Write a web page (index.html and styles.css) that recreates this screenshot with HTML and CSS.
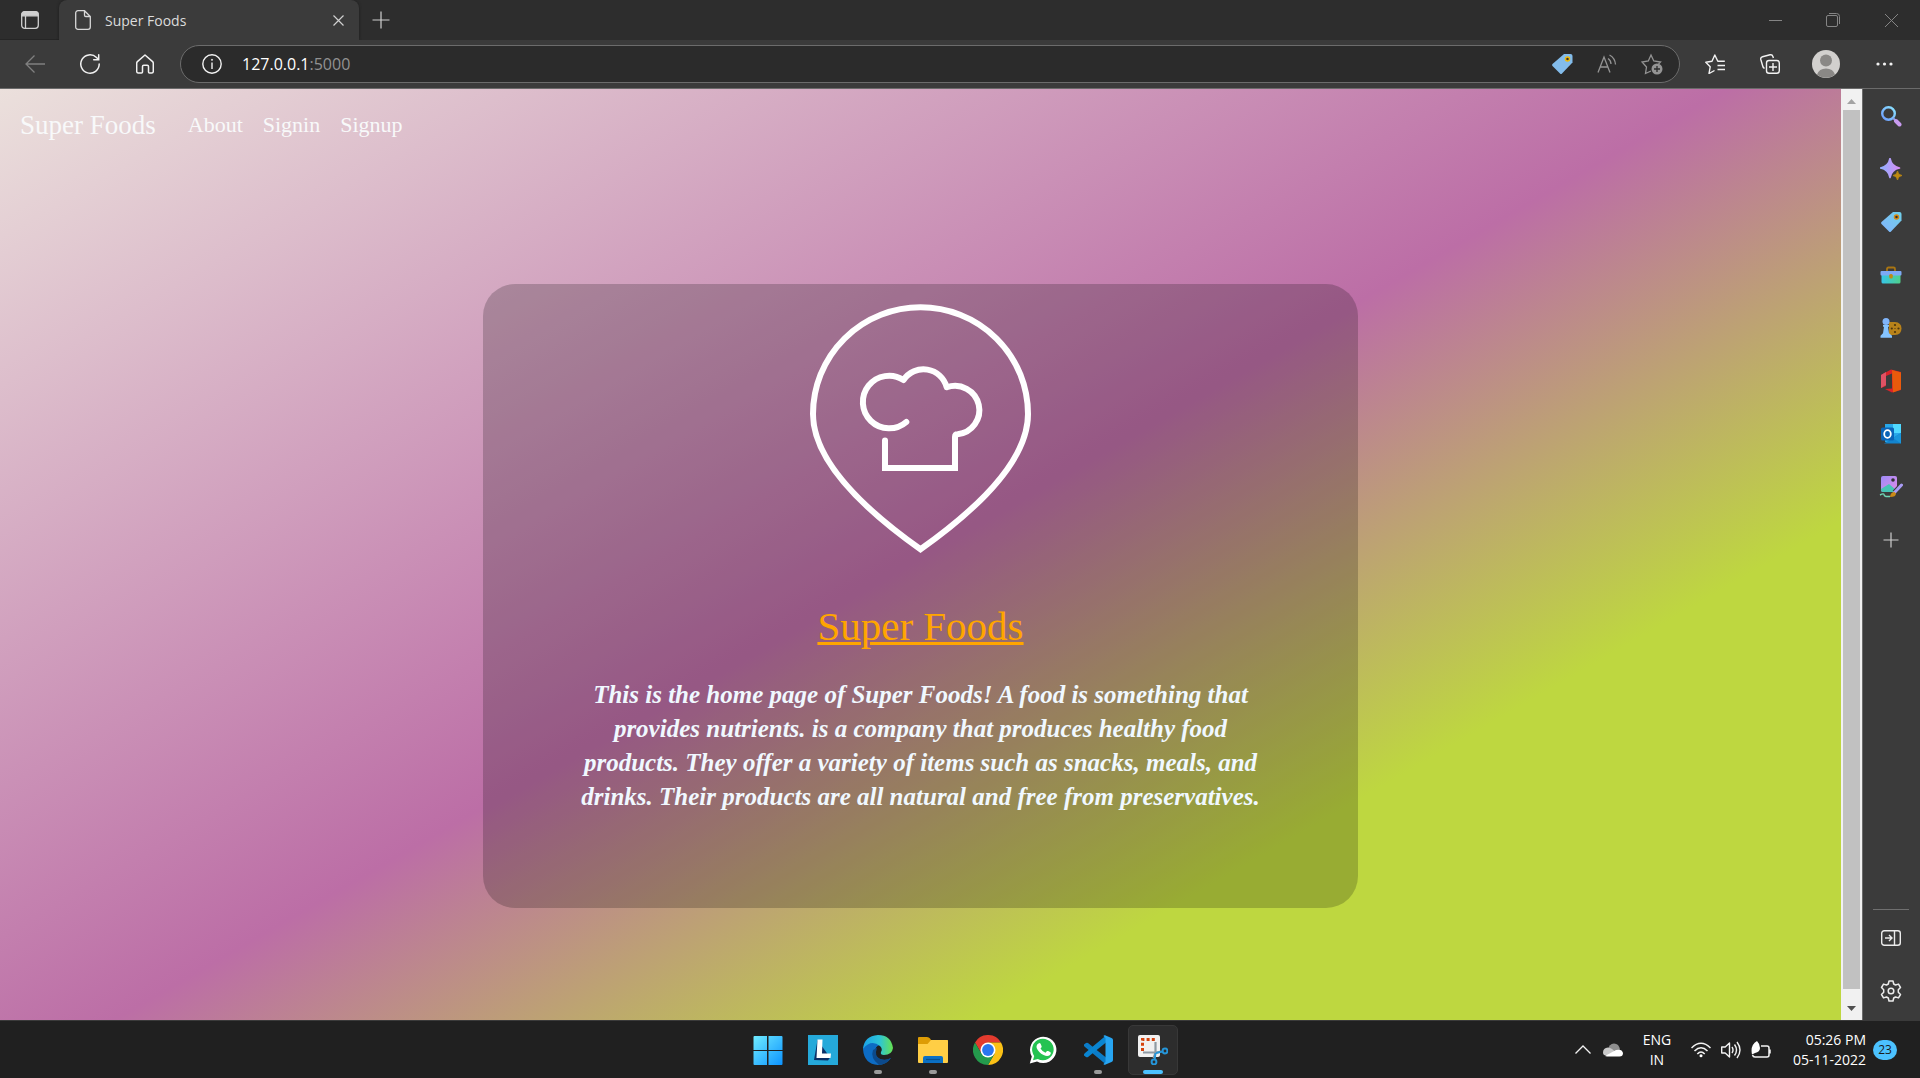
FILE: index.html
```html
<!DOCTYPE html>
<html lang="en">
<head>
<meta charset="utf-8">
<title>Super Foods</title>
<link rel="stylesheet" href="styles.css">
</head>
<body>
<header class="browser">
  <div class="tabstrip">
    <button class="tab-actions" aria-label="Tab actions menu"><svg width="18" height="18" viewBox="0 0 18 18" fill="none" stroke="#cfcfcf" stroke-width="1.3"><rect x=".7" y=".7" width="16.6" height="16.6" rx="3"/><path d="M1 4.800V3.500Q1 1 3.500 1h11Q17 1 17 3.500v1.300z" fill="#cfcfcf"/><path d="M4.500 5v12"/></svg></button>
    <div class="tab">
      <svg width="16" height="20" viewBox="0 0 16 20" fill="none" stroke="#d8d8d8" stroke-width="1.300"><path d="M3 .7h6.500L15.300 6.500V17a2.300 2.300 0 0 1-2.300 2.300H3A2.300 2.300 0 0 1 .7 17V3A2.300 2.300 0 0 1 3 .7zM9.500 1v4.200q0 1.300 1.300 1.300h4.200"/></svg>
      <span class="tab-title">Super Foods</span>
      <button class="tab-close" aria-label="Close tab"><svg width="11" height="11" viewBox="0 0 11 11" stroke="#d0d0d0" stroke-width="1.200"><path d="M.5.5l10 10M10.500.5l-10 10"/></svg></button>
    </div>
    <button class="new-tab" aria-label="New tab"><svg width="18" height="18" viewBox="0 0 18 18" stroke="#d0d0d0" stroke-width="1.200"><path d="M.5 9h17M9 .5v17"/></svg></button>
    <div class="window-controls">
      <button aria-label="Minimize"><svg width="13" height="13" viewBox="0 0 13 13" stroke="#858585"><path d="M0 6.500h13"/></svg></button>
      <button aria-label="Restore"><svg width="14" height="14" viewBox="0 0 14 14" fill="none" stroke="#858585"><rect x=".5" y="2.500" width="11" height="11" rx="1.500"/><path d="M3 .5h7.500q3 0 3 3V11"/></svg></button>
      <button aria-label="Close"><svg width="13" height="13" viewBox="0 0 13 13" stroke="#858585"><path d="M0 0l13 13M13 0L0 13"/></svg></button>
    </div>
  </div>
  <div class="toolbar">
    <div class="nav-buttons">
      <button aria-label="Back"><svg width="20" height="18" viewBox="0 0 20 18" fill="none" stroke="#808080" stroke-width="1.300"><path d="M20 9H1M9.500.5L1 9l8.500 8.500"/></svg></button>
      <button aria-label="Refresh"><svg width="20" height="20" viewBox="0 0 20 20" fill="none" stroke="#f2f2f2" stroke-width="1.500" stroke-linecap="round"><path d="M19.200 10A9.200 9.200 0 1 1 16.500 3.500L18.500 5.500M18.700.8v4.900h-5"/></svg></button>
      <button aria-label="Home"><svg width="18" height="20" viewBox="0 0 18 20" fill="none" stroke="#f2f2f2" stroke-width="1.500" stroke-linejoin="round"><path d="M9 1l7.600 6.600q.7.700.7 1.600v8.300q0 1.500-1.500 1.500h-2.300q-1 0-1-1v-5.500q0-1.300-1.300-1.300H7.800q-1.300 0-1.300 1.300V18q0 1-1 1H2.200Q.7 19 .7 17.500V9.200q0-.9.7-1.600z"/></svg></button>
    </div>
    <div class="address">
      <svg width="20" height="20" viewBox="0 0 20 20" fill="none" stroke="#f2f2f2" stroke-width="1.400"><circle cx="10" cy="10" r="9.200"/><path d="M10 8.500V15"/><circle cx="10" cy="5.800" r=".6" fill="#fff" stroke-width=".8"/></svg>
      <span class="url">127.0.0.1<span class="port">:5000</span></span>
      <button aria-label="Shopping"><svg width="22" height="22" viewBox="0 0 22 22"><path d="M13 1h6.500Q21.500 1 21.500 3v6.500L11 20.500q-1 1-2 0l-7.500-7.500q-1-1 0-2z" fill="#83bceb"/><circle cx="16.500" cy="6" r="2" fill="#333" stroke="#f0b90b" stroke-width="1.500"/></svg></button>
      <button aria-label="Read aloud"><svg width="20" height="20" viewBox="0 0 20 20" fill="none" stroke="#949494" stroke-width="1.300"><path d="M1 18.500L7 3l6 15.500M3 13h8M11 4.500q3 2 3 5.500M12.500 1q5.500 3 6 9.500"/></svg></button>
      <button aria-label="Add to favorites"><svg width="22" height="22" viewBox="0 0 22 22" fill="none" stroke="#949494" stroke-width="1.300"><path d="M10 18l-5.500 2.500 1-6.500L1 9l6.300-1L10 2l2.800 6 6.700 1-2 2"/><circle cx="16" cy="16" r="5.500" fill="#949494" stroke="none"/><path d="M16 13v6M13 16h6" stroke="#2b2b2b"/></svg></button>
    </div>
    <div class="right-buttons">
      <button aria-label="Favorites"><svg width="20" height="20" viewBox="0 0 20 20" fill="none" stroke="#f2f2f2" stroke-width="1.400" stroke-linejoin="round"><path d="M9.500 16.500L4 19.500l1.200-6.700L.8 8.200 7 7.200 9.800 1l3 6.200h7M12.500 11.500H20M12.500 15.500H20"/></svg></button>
      <button aria-label="Collections"><svg width="20" height="20" viewBox="0 0 20 20" fill="none" stroke="#f2f2f2" stroke-width="1.400"><rect x="6.500" y="6.500" width="12.800" height="12.800" rx="2.500"/><path d="M13 9v8M9 13h8M4.500 14.500Q3 13.500 2.700 12L.8 5.500Q.3 3.300 2.500 2.700L10 .8q2.200-.5 2.900 1.700l.5 1.500"/></svg></button>
      <button aria-label="Profile"><svg width="28" height="28" viewBox="0 0 28 28"><circle cx="14" cy="14" r="14" fill="#d2d0ce"/><circle cx="14" cy="10.500" r="6" fill="#8a8886"/><path d="M5 24.500q2-6 9-6t9 6A14 14 0 0 1 5 24.500z" fill="#8a8886"/></svg></button>
      <button aria-label="Settings and more"><svg width="17" height="4" viewBox="0 0 17 4" fill="#f2f2f2"><circle cx="2" cy="2" r="1.600"/><circle cx="8.500" cy="2" r="1.600"/><circle cx="15" cy="2" r="1.600"/></svg></button>
    </div>
  </div>
</header>

<div class="workspace">
  <div class="site">
    <nav class="site-nav">
      <a class="brand" href="#">Super Foods</a>
      <a class="nav-link" href="#about">About</a>
      <a class="nav-link" href="#signin">Signin</a>
      <a class="nav-link" href="#signup">Signup</a>
    </nav>
    <main class="card">
      <svg class="logo" width="222" height="250" viewBox="0 0 222 250" fill="none" stroke="#fff" stroke-width="6"><path d="M110.500 3.300A107.500 106.700 0 0 1 218 110C218 150 180 196 110.500 245.300 41 196 3 150 3 110A107.500 106.700 0 0 1 110.500 3.300z"/><path stroke-linecap="round" stroke-linejoin="round" d="M96.300 118A26.300 26.300 0 1 1 93.500 76A24 24 0 0 1 136.700 83.300A24.300 24.300 0 1 1 147.500 130.300Q145 130.300 145 133V150"/><path stroke-linecap="round" d="M145 140V164H75V136.500"/></svg>
      <h1 class="title"><a href="#">Super Foods</a></h1>
      <p class="intro">This is the home page of Super Foods! A food is something that provides nutrients. is a company that produces healthy food products. They offer a variety of items such as snacks, meals, and drinks. Their products are all natural and free from preservatives.</p>
    </main>
  </div>
  <div class="scrollbar">
    <svg width="9" height="5" viewBox="0 0 9 5"><path d="M0 5L4.500 0 9 5z" fill="#a3a3a3"/></svg>
    <div class="thumb"></div>
    <svg width="9" height="5" viewBox="0 0 9 5"><path d="M0 0L4.500 5 9 0z" fill="#505050"/></svg>
  </div>
  <aside class="sidebar">
    <button aria-label="Search"><svg width="22" height="22" viewBox="0 0 22 22" fill="none"><defs><linearGradient id="lens" x1="0" y1="1" x2="1" y2="0"><stop stop-color="#6d9bff"/><stop offset="1" stop-color="#8be4ff"/></linearGradient></defs><circle cx="8.500" cy="8.500" r="6.300" stroke="url(#lens)" stroke-width="2.400"/><path d="M13 13l2.500 2.500" stroke="#8aa0e8" stroke-width="2"/><path d="M16 16l3.500 3.500" stroke="#c99bf0" stroke-width="4" stroke-linecap="round"/></svg></button>
    <button aria-label="Discover"><svg width="22" height="22" viewBox="0 0 22 22"><defs><linearGradient id="spark" x1="0" y1="0" x2="1" y2="0"><stop stop-color="#8fb0ff"/><stop offset="1" stop-color="#d58cf5"/></linearGradient></defs><path d="M10 .5Q11.500 8.500 19.500 10 11.500 11.500 10 19.500 8.500 11.500.5 10 8.500 8.500 10 .5z" fill="url(#spark)" stroke="url(#spark)" stroke-width="1.600" stroke-linejoin="round"/><path d="M17.500 13q.5 4 4.500 4.500-4 .5-4.500 4.500-.5-4-4.500-4.500 4-.5 4.500-4.500z" fill="#c08a12" stroke="#c08a12" stroke-width=".8"/></svg></button>
    <button aria-label="Shopping"><svg width="22" height="22" viewBox="0 0 22 22"><defs><linearGradient id="tag" x1="0" y1="1" x2="1" y2="0"><stop stop-color="#83b4ff"/><stop offset="1" stop-color="#6fd0e8"/></linearGradient></defs><path d="M13 1h6.500Q21.500 1 21.500 3v6.500L11 20.500q-1 1-2 0l-7.500-7.500q-1-1 0-2z" fill="url(#tag)"/><circle cx="16.500" cy="6" r="2" fill="#333" stroke="#d88a10" stroke-width="1.500"/></svg></button>
    <button aria-label="Tools"><svg width="22" height="18" viewBox="0 0 22 18"><defs><linearGradient id="box"><stop stop-color="#36c5e8"/><stop offset="1" stop-color="#4fd08a"/></linearGradient></defs><path d="M7 5V3q0-1.500 1.500-1.500h5Q15 1.500 15 3v2" fill="none" stroke="#a97512" stroke-width="1.800"/><path d="M1.500 8h19v8q0 1.500-1.500 1.500H3Q1.500 17.500 1.500 16z" fill="url(#box)"/><rect x=".5" y="5" width="21" height="4.500" rx="1" fill="#7da9f5"/><rect x="9.200" y="8" width="3.600" height="4.500" rx="1.500" fill="#c08a12"/></svg></button>
    <button aria-label="Games"><svg width="22" height="22" viewBox="0 0 22 22"><path d="M9 5h6q6.500.5 6.500 6.500T15 18H9z" fill="#b8821a"/><g fill="#4b3510"><circle cx="15" cy="8" r="1.100"/><circle cx="18.500" cy="11.500" r="1.100"/><circle cx="15" cy="15" r="1.100"/><circle cx="11.800" cy="11.500" r="1.100"/><circle cx="15" cy="11.500" r=".6"/></g><circle cx="6" cy="4.500" r="3.500" fill="#80b5fa"/><path d="M3 8h6v1.800H8l1 6.500 3 2.500v2H.5v-2l2.500-2.500 1-6.500H3z" fill="#85c4ff"/></svg></button>
    <button aria-label="Office"><svg width="22" height="24" viewBox="0 0 22 24"><path d="M1 6L11 .5 21 3v18l-9 2.500L5 20l7-.5V4.500L6 7v10l-5 2z" fill="#d9232b"/><path d="M12 1l9 2.500v17L13 23.500z" fill="#ea5a0c"/><path d="M1 6l5-3v13l-5 3z" fill="#df5264"/></svg></button>
    <button aria-label="Outlook"><svg width="22" height="22" viewBox="0 0 22 22"><path d="M5 1h16v18H5z" fill="#28a8ea"/><path d="M13 1h8v9h-8z" fill="#50d9ff"/><path d="M4 20.500L21 10v10.500z" fill="#1384ce"/><path d="M21 10v10.500L13 15z" fill="#1a96dc"/><rect x="1" y="4.500" width="13" height="13" rx="1.500" fill="#0a64b8"/><ellipse cx="7.500" cy="11" rx="3.300" ry="3.800" fill="none" stroke="#fff" stroke-width="1.800"/></svg></button>
    <button aria-label="Drop"><svg width="24" height="24" viewBox="0 0 24 24"><defs><linearGradient id="pic" x1="0" y1="0" x2="1" y2="1"><stop stop-color="#9d8cf8"/><stop offset="1" stop-color="#e08be8"/></linearGradient></defs><rect x="2" y="1" width="16" height="16" rx="2" fill="url(#pic)"/><circle cx="14" cy="5" r="1.800" fill="#333"/><path d="M2 14l8-5 7 6-2 2H4q-2 0-2-2z" fill="#46c5b5"/><path d="M22.500 10l-7 7.500" stroke="#3b3b3b" stroke-width="5"/><path d="M22.500 10l-7 7.500" stroke="#a99cf5" stroke-width="3" stroke-linecap="round"/><path d="M15.500 17q-4 0-4.500 5 6 0 6-3.500z" fill="#c98a18"/><path d="M1 20q4-2 4-.5T7 21.500h4" stroke="#6fd7b5" stroke-width="1.400" fill="none"/></svg></button>
    <button aria-label="Add"><svg width="16" height="16" viewBox="0 0 16 16" stroke="#cfcfcf" stroke-width="1.200"><path d="M.5 8h15M8 .5v15"/></svg></button>
    <div class="sidebar-foot">
      <button aria-label="Hide sidebar"><svg width="20" height="16" viewBox="0 0 20 16" fill="none" stroke="#ececec" stroke-width="1.400"><rect x=".7" y=".7" width="18.600" height="14.600" rx="2.500"/><path d="M13.500 1v14M4 8h6.500M8 5l3 3-3 3"/></svg></button>
      <button aria-label="Settings"><svg width="22" height="22" viewBox="0 0 22 22" fill="none" stroke="#ececec" stroke-width="1.500" stroke-linejoin="round"><path d="M9 1h4l.7 3 1.800 1 3-.9 2 3.400L18.300 9.800v2.400l2.200 2.300-2 3.400-3-.9-1.800 1L13 21H9l-.7-3-1.800-1-3 .9-2-3.400 2.200-2.300V9.800L1.500 7.500l2-3.400 3 .9 1.800-1z"/><circle cx="11" cy="11" r="2.800"/></svg></button>
    </div>
  </aside>
</div>

<footer class="taskbar">
  <div class="apps">
    <button aria-label="Start"><svg width="30" height="30" viewBox="0 0 30 30"><defs><linearGradient id="win" gradientUnits="userSpaceOnUse" x1="0" y1="0" x2="30" y2="30"><stop stop-color="#72eeff"/><stop offset="1" stop-color="#0b92ff"/></linearGradient></defs><path fill="url(#win)" d="M.5 2q0-1 1-1H14v14H.5zM15.500 1H28.500q1 0 1 1V15h-14zM.5 16H14v14H1.500q-1 0-1-1zM15.500 16h14v13q0 1-1 1h-13z"/></svg></button>
    <button aria-label="L app"><svg width="30" height="30" viewBox="0 0 30 30"><path fill="#25a9da" d="M0 0h30v30H0z"/><path fill="#0b2f66" d="M9.500 5L6 25l14 .5 2-3z"/><path d="M9.500 4.500h5l-.5 14h9l-.5 4.500H8.500z" fill="#fff"/></svg></button>
    <button class="running" aria-label="Edge"><svg width="30" height="30" viewBox="0 0 30 30"><defs><linearGradient id="edge"><stop stop-color="#1aa2e8"/><stop offset=".55" stop-color="#2dc4d8"/><stop offset="1" stop-color="#66e34f"/></linearGradient></defs><path fill="#0d6cc4" d="M0 14C2 6 10 5 17 10q-5 1-5 7 1 8 10 8 3 0 6-2-5 7-13 7Q1 29 0 14z"/><path fill="#0c4a8c" d="M10 15q-3 8 6 15 8-1 12-7-6 3-11 1-6-3-3-11z"/><path fill="url(#edge)" d="M0 14Q1 1 15 0q13 0 15 13-1 7-9 7-4 0-3-3 2-3-1-6Q8 4 0 14z"/></svg></button>
    <button class="running" aria-label="File Explorer"><svg width="30" height="28" viewBox="0 0 30 28"><path fill="#dd9c05" d="M0 2q0-1 1-1h8q2 0 3 1.500L13 4h16q1 0 1 1v8H0z"/><path fill="#ffce45" d="M0 8h9.500L13 4h16q1 0 1 1v21q0 1-1 1H1q-1 0-1-1z"/><path fill="#0b70c4" d="M5 27v-5q0-2 2-2h16q2 0 2 2v5z"/><path d="M8 23.500h14" stroke="#07508f" stroke-width="1.200"/></svg></button>
    <button aria-label="Chrome"><svg width="30" height="30" viewBox="0 0 30 30"><path fill="#e33b2e" d="M2 7.500a15 15 0 0 1 26 0H15l-6.500 11z"/><path fill="#fbc116" d="M28 7.500A15 15 0 0 1 15 30l6.500-11.200L15 7.500z"/><path fill="#249a4c" d="M2 7.500l6.500 11.300q6.500 6 13 0L15 30A15 15 0 0 1 2 7.500z"/><circle cx="15" cy="15" r="7.500" fill="#fff"/><circle cx="15" cy="15" r="5.900" fill="#2a76f0"/></svg></button>
    <button aria-label="WhatsApp"><svg width="28" height="28" viewBox="0 0 28 28"><path fill="#fff" d="M.8 27.500l2-7A13.200 13.200 0 1 1 8 25.500z"/><path fill="#25c352" d="M4 24.200l1.200-4.300A10.800 10.800 0 1 1 8.800 23z"/><path fill="#fff" d="M9.500 7.500q1.500-1 2.200.5l1 2.500q0 .8-1.200 2 1.700 3 5 4.200l1.500-1.600q.5-.4 1.200 0l2.300 1.200q1 .8-.5 2.700-2.500 2-6.500 0-5-2.500-6.800-7-.8-3 1.800-4.500z"/></svg></button>
    <button class="running" aria-label="Visual Studio Code"><svg width="30" height="30" viewBox="0 0 30 30"><path fill="#0b7cc8" d="M1 9.500L3 8q1-.5 2 0l18 14.500v7L2 12q-1.500-1-1-2.500z"/><path fill="#0a85d1" d="M1 20.500L3 22q1 .5 2 0L23 7.500V.5L2 18q-1.500 1-1 2.500z"/><path fill="#27a5f2" d="M22 .3L28.500 3Q30 3.700 30 5v20q0 1.300-1.500 2L22 29.800q-1 .3-1.500-.8L22.500 27V3L20.500 1q.5-1 1.500-.7z"/></svg></button>
    <button class="active" aria-label="Snipping Tool"><svg width="30" height="30" viewBox="0 0 30 30"><rect width="22" height="22" rx="2" fill="#f1f1f1"/><path fill="none" stroke="#d5420c" stroke-width="3" stroke-dasharray="3 2.200" d="M4.500 16V4.500H17"/><path fill="none" stroke="#8f9aa3" stroke-width="2.200" d="M17.500 7v11l-2 5M5 17.500h14l4-1"/><g fill="none" stroke="#2595d8" stroke-width="2"><circle cx="27" cy="16" r="2.400"/><circle cx="16" cy="27" r="2.400"/><path d="M17.500 18l-.8 6.500M18 18l6.500-1.500"/></g></svg></button>
  </div>
  <div class="tray">
    <button class="tray-icon" aria-label="Show hidden icons"><svg width="16" height="9" viewBox="0 0 16 9" fill="none" stroke="#f2f2f2" stroke-width="1.300"><path d="M.5 8.500L8 1l7.500 7.500"/></svg></button>
    <button class="tray-icon" aria-label="OneDrive"><svg width="20" height="14" viewBox="0 0 20 14"><path fill="#8e8e8e" d="M5 7Q6 .5 11 .5q5 0 6 6l-6 4z"/><path fill="#c9c9c9" d="M0 9.500Q0 5 5 4.500q2 0 4 1.500l8 6.500H4Q0 13 0 9.500z"/><path fill="#fff" d="M2 13l11-6q6-1.500 7 3 0 3.500-3.500 3.500H4z"/></svg></button>
    <button class="lang">ENG<br>IN</button>
    <button class="tray-icon" aria-label="Wi-Fi"><svg width="20" height="16" viewBox="0 0 20 16" fill="none" stroke="#f2f2f2" stroke-width="1.500"><path d="M.5 6Q10-3.500 19.500 6M3.500 9Q10 2.500 16.500 9M6.300 12Q10 8 13.700 12"/><circle cx="10" cy="13.700" r="1.500" fill="#fff" stroke="none"/></svg></button>
    <button class="tray-icon" aria-label="Volume"><svg width="20" height="18" viewBox="0 0 20 18" fill="none" stroke="#f2f2f2" stroke-width="1.400" stroke-linejoin="round"><path d="M.7 6h3.500L8.500 2v14L4.200 12H.7zM11 6q2 3 0 6M13.500 3.500q4 5.500 0 11M16 1q6 8 0 16"/></svg></button>
    <button class="tray-icon" aria-label="Battery"><svg width="20" height="18" viewBox="0 0 20 18" fill="none" stroke="#f2f2f2" stroke-width="1.500"><path d="M10 5h6q2 0 2 2v7q0 2-2 2H4q-2 0-2.500-2M19 8.500v4"/><path fill="#fff" stroke="none" d="M6 0Q9 3 9 7T4 12L1 13.500Q-1 4 6 0z"/></svg></button>
    <button class="clock">05:26 PM<br>05-11-2022</button>
    <span class="badge">23</span>
  </div>
</footer>
</body>
</html>
```
FILE: styles.css
```css
* { box-sizing: border-box; }

body {
  margin: 0;
  min-height: 100vh;
  display: flex;
  flex-direction: column;
  background: #202020;
  color: #fff;
  font-family: "Open Sans", "Noto Sans", sans-serif;
  font-size: 14px;
}

button {
  border: 0;
  padding: 0;
  background: none;
  color: inherit;
  font: inherit;
  display: flex;
  align-items: center;
  justify-content: center;
}

svg { display: block; flex: none; }

/* Browser frame */
.browser { border-bottom: 1px solid #6b6b6b; background: #3b3b3b; }

.tabstrip { display: flex; height: 40px; background: #2d2d2d; }
.tab-actions { width: 59px; box-shadow: inset 0 -1px #252525; }
.tab {
  width: 300px;
  padding: 0 10px 0 16px;
  display: flex;
  align-items: center;
  gap: 14px;
  background: #3b3b3b;
  border-radius: 8px 8px 0 0;
  box-shadow: 0 0 3px #1c1c1c;
  clip-path: inset(0 -3px);
}
.tab-title { flex: 1; color: #dcdcdc; }
.tab-close { width: 22px; height: 22px; }
.new-tab { width: 44px; }
.window-controls { display: flex; margin-left: auto; }
.window-controls button { width: 58px; }
.new-tab, .window-controls { height: 40px; }

.toolbar { display: flex; align-items: center; height: 48px; }
.nav-buttons { display: flex; padding: 0 8px 0 7px; }
.nav-buttons button, .right-buttons button { width: 55px; height: 36px; }
.right-buttons { display: flex; padding: 0 7px; }
.right-buttons button:nth-child(n+3) { width: 58px; }

.address {
  flex: 1;
  height: 38px;
  padding: 0 5px 0 21px;
  display: flex;
  align-items: center;
  background: #2b2b2b;
  border: 1px solid #6c6c6c;
  border-radius: 19px;
}
.address button { width: 45px; height: 32px; }
.url { flex: 1; padding-left: 20px; font-size: 16px; }
.port { color: #929292; }

.workspace { flex: 1; display: flex; }

/* Web page */
.site {
  flex: 1;
  background: linear-gradient(150deg, #ebe0dc 0%, #bc6ea6 50%, #bed740 75%);
  font-family: "Liberation Serif", serif;
}
.site-nav {
  display: flex;
  align-items: center;
  gap: 20px;
  padding: 16px 20px;
  line-height: 40px;
}
.site-nav a { color: #f8f9fa; text-decoration: none; }
.brand { font-size: 27px; margin-right: 12px; }
.nav-link { font-size: 22px; }

.card {
  width: 90%;
  max-width: 875px;
  margin: 123px auto 80px;
  padding: 20px 84px 94px;
  display: flex;
  flex-direction: column;
  align-items: center;
  background: rgba(0, 0, 0, 0.2);
  border-radius: 32px;
  text-align: center;
}
.title {
  margin: 48px 0 28px;
  font-size: 41px;
  line-height: 48px;
  font-weight: 400;
}
.title a { color: #ffa500; text-decoration-thickness: 3px; }
.intro {
  margin: 0;
  color: #f0f8ff;
  font-size: 25px;
  line-height: 34px;
  font-weight: 700;
  font-style: italic;
}

.scrollbar {
  width: 21px;
  padding: 10px 2px 9px;
  display: flex;
  flex-direction: column;
  align-items: center;
  background: #f1f1f1;
}
.thumb { flex: 1; align-self: stretch; margin: 6px 0 17px; background: #c1c1c1; }

/* Edge sidebar */
.sidebar {
  width: 58px;
  padding: 11px 2px 13px 0;
  display: flex;
  flex-direction: column;
  align-items: center;
  gap: 21px;
  background: #3b3b3b;
  border-left: 1px solid #6b6b6b;
}
.sidebar button { width: 36px; height: 32px; }
.sidebar-foot {
  margin-top: auto;
  padding-top: 12px;
  display: flex;
  flex-direction: column;
  gap: 21px;
  border-top: 1px solid #6f6f6f;
}

/* Taskbar */
.taskbar {
  height: 58px;
  display: grid;
  grid-template-columns: 1fr auto 1fr;
  align-items: center;
  background: #202020;
  border-top: 1px solid #3a3a3a;
}
.apps { grid-column: 2; display: flex; gap: 5px; }
.apps button { position: relative; width: 50px; height: 50px; border-radius: 5px; }
.apps .active { background: #2d2d2d; border: 1px solid #383838; }
.running::after, .active::after {
  content: "";
  position: absolute;
  bottom: 1px;
  left: calc(50% - 4px);
  width: 8px;
  height: 4px;
  border-radius: 2px;
  background: #9a9a9a;
}
.active::after { left: calc(50% - 10px); bottom: 0; width: 20px; background: #4cc2ff; }

.tray { display: flex; justify-content: flex-end; align-items: center; padding-right: 23px; line-height: 20px; }
.tray-icon { width: 30px; height: 40px; }
.lang { width: 58px; }
.clock { margin: 0 7px 0 17px; text-align: right; }
.badge {
  width: 24px;
  border-radius: 10px;
  background: #4cc2ff;
  color: #1b1b1b;
  font-size: 12px;
  text-align: center;
}
```
